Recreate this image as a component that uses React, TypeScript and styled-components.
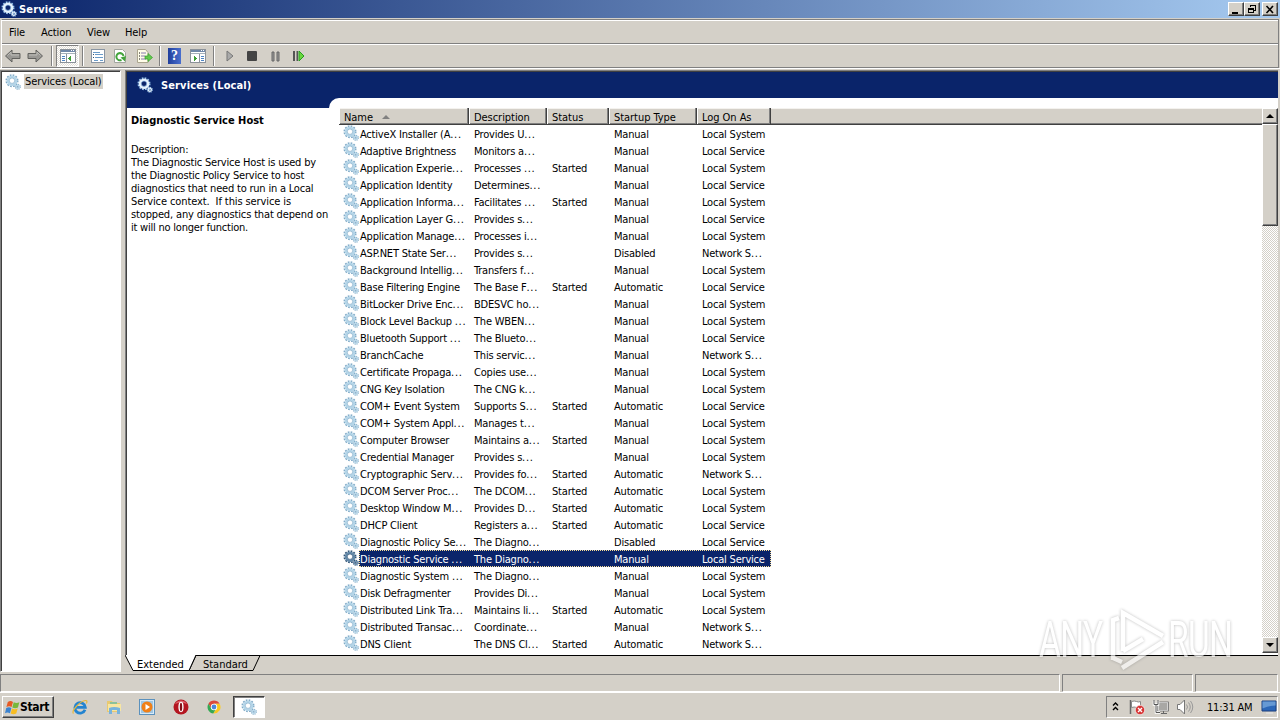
import type { ReactNode } from "react";
import styled, { createGlobalStyle, css } from "styled-components";

const GlobalStyle = createGlobalStyle`
    * { box-sizing: border-box; }
    body {
        margin: 0;
        overflow: hidden;
        background: #d4d0c8;
        font-family: "DejaVu Sans Condensed", "DejaVu Sans", sans-serif;
        font-stretch: condensed;
        font-size: 11px;
        letter-spacing: -0.2px;
        color: #000;
        cursor: default;
    }
    svg { display: block; flex: none; }
`;

const raised = css`
    background: #d4d0c8;
    border: 1px solid;
    border-color: #fff #404040 #404040 #fff;
    box-shadow: inset -1px -1px 0 #808080;
`;

const Screen = styled.div`
    position: relative;
    width: 1280px;
    height: 720px;
    display: flex;
    flex-direction: column;
    overflow: hidden;
    background: #d4d0c8;
`;

const TitleBar = styled.div`
    height: 18px;
    flex: none;
    display: flex;
    align-items: center;
    padding: 0 2px 0 1px;
    background: linear-gradient(to right, #0a246a, #a6caf0);
    color: #fff;
`;

const TitleText = styled.span`
    flex: 1;
    margin-left: 2px;
    font-weight: bold;
    letter-spacing: 0.15px;
`;

const CaptionButton = styled.div<{ $gap?: boolean }>`
    ${raised}
    width: 16px;
    height: 14px;
    margin-left: ${({ $gap }) => ($gap ? "2px" : "0")};
    display: flex;
    align-items: center;
    justify-content: center;
`;

const Bars = styled.div`
    flex: none;
    margin: 1px 1px 0;
    border-top: 1px solid #808080;
    border-left: 1px solid #fff;
    border-right: 1px solid #808080;
`;

const MenuBar = styled.div`
    height: 24px;
    display: flex;
    align-items: center;
    gap: 16px;
    padding: 0 7px;
    border-top: 1px solid #fff;
    border-bottom: 1px solid #808080;
`;

const MenuItem = styled.span<{ $width: number }>`
    width: ${({ $width }) => $width}px;
    white-space: nowrap;
    letter-spacing: -0.1px;
`;

const ToolBar = styled.div`
    height: 24px;
    display: flex;
    align-items: center;
    padding-left: 2px;
    border-top: 1px solid #fff;
    border-bottom: 1px solid #808080;
`;

const ToolButton = styled.div<{ $width?: number; $pressed?: boolean }>`
    width: ${({ $width }) => $width ?? 23}px;
    height: 22px;
    display: flex;
    align-items: center;
    justify-content: center;
    ${({ $pressed }) => $pressed && css`
        border: 1px solid;
        border-color: #808080 #fff #fff #808080;
        background: repeating-conic-gradient(#fff 0 25%, #e0ddd6 0 50%) 0 0 / 2px 2px;
    `}
`;

const ToolDivider = styled.div`
    width: 2px;
    height: 20px;
    margin: 0 3px;
    border-left: 1px solid #808080;
    border-right: 1px solid #fff;
`;

const Body = styled.div`
    flex: none;
    height: 604px;
    display: flex;
    gap: 4px;
    padding-top: 1px;
    border-top: 1px solid #fff;
`;

const TreePane = styled.div`
    width: 121px;
    height: 602px;
    padding: 2px 1px 1px;
    border: 1px solid;
    border-color: #808080 #fff #fff #808080;
    box-shadow: inset 1px 1px 0 #404040;
    background: #fff;
`;

const TreeNode = styled.div`
    display: flex;
    align-items: center;
    height: 17px;
    padding-left: 3px;
`;

const TreeLabel = styled.span`
    margin-left: 3px;
    padding: 0 2px 0 1px;
    width: 79px;
    height: 15px;
    line-height: 15px;
    background: #d4d0c8;
    white-space: nowrap;
    letter-spacing: -0.1px;
`;

const MainPane = styled.div`
    width: 1153px;
    display: flex;
    flex-direction: column;
`;

const View = styled.div`
    height: 585px;
    display: flex;
    flex-direction: column;
    border-top: 1px solid #808080;
    border-left: 1px solid #808080;
    box-shadow: inset 1px 1px 0 #404040;
    padding: 1px 0 0 1px;
    background: #fff;
`;

const Banner = styled.div`
    height: 26px;
    flex: none;
    display: flex;
    align-items: center;
    padding-left: 10px;
    background: #0a246a;
    color: #fff;
    font-weight: bold;
    letter-spacing: 0.12px;
`;

const BannerText = styled.span`
    margin-left: 8px;
`;

const Split = styled.div`
    flex: 1;
    min-height: 0;
    display: flex;
    background: linear-gradient(#0a246a, #0a246a) 0 0 / 230px 10px no-repeat, #fff;
`;

const DetailPane = styled.div`
    width: 202px;
    padding: 16px 0 0 4px;
    line-height: 13px;
    white-space: pre;
`;

const DetailTitle = styled.div`
    font-weight: bold;
    margin-bottom: 16px;
    letter-spacing: 0;
`;

const DetailLine = styled.div<{ $ls?: number }>`
    letter-spacing: ${({ $ls }) => $ls ?? -0.2}px;
`;

const ListArea = styled.div`
    flex: 1;
    display: flex;
    padding: 10px 0 2px 10px;
    border-top-left-radius: 10px;
    background: #fff;
`;

const List = styled.div`
    width: 923px;
`;

const HeaderRow = styled.div`
    height: 17px;
    display: flex;
    background: #d4d0c8;
    border-bottom: 1px solid #404040;
    box-shadow: inset 0 -1px 0 #808080, inset 0 1px 0 #f4f2ee;
`;

const HeaderCell = styled.div<{ $width: number }>`
    width: ${({ $width }) => $width}px;
    display: flex;
    align-items: center;
    gap: 9px;
    padding: 2px 0 0 4px;
    border-left: 1px solid #fff;
    border-right: 1px solid #404040;
    box-shadow: inset -1px 0 0 #808080;
    letter-spacing: -0.05px;
`;

const Row = styled.div<{ $selected?: boolean }>`
    height: 17px;
    display: flex;
    line-height: 19px;
    color: ${({ $selected }) => ($selected ? "#fff" : "#000")};
`;

const IconCell = styled.div`
    width: 20px;
    padding: 0 0 0 4px;
`;

const Cells = styled.div<{ $selected?: boolean }>`
    width: 412px;
    height: 17px;
    display: flex;
    ${({ $selected }) => $selected && css`
        background: #0a246a;
        outline: 1px dotted #f5db95;
        outline-offset: -1px;
    `}
`;

const Cell = styled.span<{ $width: number }>`
    width: ${({ $width }) => $width}px;
    padding-left: 1px;
    white-space: nowrap;
`;

const Dots = styled.span`
    letter-spacing: 0.7px;
`;

const ScrollBar = styled.div`
    width: 16px;
    display: flex;
    flex-direction: column;
    justify-content: space-between;
    background: repeating-conic-gradient(#fff 0 25%, #d4d0c8 0 50%) 0 0 / 2px 2px;
`;

const ScrollButton = styled.div`
    ${raised}
    height: 16px;
    display: flex;
    align-items: center;
    justify-content: center;
`;

const ScrollThumb = styled.div`
    ${raised}
    height: 102px;
    margin-bottom: auto;
`;

const Tabs = styled.div`
    height: 17px;
`;

const StatusBar = styled.div`
    flex: none;
    height: 18px;
    margin-top: 2px;
    display: flex;
    gap: 2px;
`;

const StatusPart = styled.div<{ $width: number }>`
    width: ${({ $width }) => $width}px;
    border: 1px solid;
    border-color: #808080 #fff #fff #808080;
`;

const TaskBar = styled.div`
    flex: 1;
    display: flex;
    align-items: flex-start;
    padding: 3px 2px 0 2px;
    border-top: 1px solid #fff;
`;

const StartButton = styled.div`
    ${raised}
    width: 52px;
    height: 22px;
    display: flex;
    align-items: center;
    padding-left: 2px;
    font-weight: bold;
    font-size: 12px;
    letter-spacing: -0.3px;
`;

const QuickLaunch = styled.div`
    height: 22px;
    display: flex;
    align-items: center;
    gap: 17.5px;
    margin-left: 18px;
`;

const TaskButton = styled.div`
    width: 32px;
    height: 22px;
    margin-left: 11px;
    display: flex;
    align-items: center;
    justify-content: center;
    border: 1px solid;
    border-color: #404040 #fff #fff #404040;
    box-shadow: inset 1px 1px 0 #808080;
    background: #fff;
`;

const Tray = styled.div`
    width: 172px;
    height: 22px;
    margin-left: auto;
    display: flex;
    align-items: center;
    padding-left: 5px;
    border: 1px solid;
    border-color: #808080 #fff #fff #808080;
`;

const TrayIcons = styled.div`
    display: flex;
    gap: 6px;
`;

const Clock = styled.span`
    width: 49px;
    margin: 0 5px 0 13px;
    white-space: nowrap;
`;

const Watermark = styled.div`
    position: absolute;
    left: 1039px;
    top: 606px;
    display: flex;
    align-items: center;
    height: 68px;
    opacity: 0.65;
    filter: drop-shadow(0 0 1.5px rgba(90, 90, 90, 0.6));
    pointer-events: none;
`;

const WatermarkWord = styled.span<{ $width: number }>`
    width: ${({ $width }) => $width}px;
    font: 400 50px/68px "Roboto", sans-serif;
    letter-spacing: -1px;
    color: #fff;
    transform: scaleX(0.67);
    transform-origin: left;
    white-space: nowrap;
`;

const Gear = ({ tone = "#7fa9c6", body = "#b4d5e8" }: { tone?: string; body?: string }) => (
    <svg width="16" height="16" viewBox="0 0 16 16" fill="none">
        <circle cx="7" cy="6.7" r="5.7" stroke={tone} strokeWidth="1.6" strokeDasharray="1.7 1.284" />
        <circle cx="7" cy="6.7" r="4" stroke={body} strokeWidth="2.6" />
        <circle cx="7" cy="6.7" r="2.7" stroke={tone} strokeWidth="0.6" />
        <circle cx="12.8" cy="12.8" r="2.5" stroke={tone} strokeWidth="1.1" strokeDasharray="1.1 0.86" />
        <circle cx="12.8" cy="12.8" r="1.6" stroke={body} strokeWidth="1.3" />
        <circle cx="12.8" cy="12.8" r="0.9" fill={tone} />
    </svg>
);

const Arrow = ({ flip }: { flip?: boolean }) => (
    <svg width="18" height="16" viewBox="0 0 18 16" transform={flip ? "scale(-1 1)" : undefined}>
        <path d="M1.5 8 8 2v3.5h8v5H8V14z" fill="#999894" stroke="#62625f" />
        <path d="M3.5 7.5 7 4v3h8" fill="none" stroke="#bdbcb7" />
    </svg>
);

// console window with a panel on one side
const PaneIcon = ({ right }: { right?: boolean }) => (
    <svg width="16" height="14" viewBox="0 0 16 14" shapeRendering="crispEdges">
        <rect x="0.5" y="0.5" width="15" height="13" fill="#fff" stroke="#8b929a" />
        <path d="M1 1h14v2H1z" fill="#7188a8" />
        <path d="M11 1h1v1h-1zM13 1h1v1h-1z" fill="#fff" />
        <path d="M1 4h14v1H1z" fill="#a7b1bb" />
        <path d={right ? "M9.5 5v9" : "M6.5 5v9"} stroke="#8b929a" />
        <path d={right ? "M11 7h3M11 9h3M11 11h3" : "M2 7h3M2 9h3M2 11h3"} stroke="#4f85c4" />
        <path d={right ? "M4 7v5l3-2.5z" : "M11 7v5L8 9.5z"} fill="#3d9e35" />
    </svg>
);

const SheetIcon = () => (
    <svg width="16" height="16" viewBox="0 0 16 16">
        <rect x="1.5" y="1.500" width="13" height="13" fill="#fff" stroke="#8995a3" />
        <path d="M3 4.500h7M5 6.500h8M5 9.500h8M4 12.500h4M10 12.500h3" stroke="#6a9bc8" />
        <path d="M3 6.500h1M3 9.500h1" stroke="#35526f" />
    </svg>
);

const RefreshIcon = () => (
    <svg width="16" height="16" viewBox="0 0 16 16">
        <path d="M2.500 1.500h8l3 3v10h-11z" fill="#fff" stroke="#a1a59e" />
        <path d="M9.500 12A3.600 3.600 0 1 1 11.500 8" fill="none" stroke="#43a43b" strokeWidth="2" />
        <path d="M8.500 9.500 14 8l-1 5.500z" fill="#43a43b" />
    </svg>
);

const ExportIcon = () => (
    <svg width="17" height="16" viewBox="0 0 17 16">
        <path d="M1.500 1.500h8l2.500 3v10H1.500z" fill="#fffde9" stroke="#aaa58e" />
        <path d="M5 5h5M5 8h4M5 11h5" stroke="#867cad" />
        <path d="M3 5h1M3 8h1M3 11h1" stroke="#111" />
        <path d="M9 8h3V5.500l4.500 4L12 13.500V11H9z" fill="#62ca4e" stroke="#369c2d" strokeWidth="0.7" />
    </svg>
);

const HelpBadge = styled.div`
    width: 13px;
    height: 16px;
    background: linear-gradient(90deg, #213f9c, #496fce);
    color: #fff;
    font: bold 14px/16px "Liberation Serif", serif;
    text-align: center;
`;

const StartFlag = () => (
    <svg width="15" height="15" viewBox="0 0 16 16">
        <path d="M3 2q3-2 5.500 0L7 7.500Q4.500 6 1.500 7.500z" fill="#e75a24" />
        <path d="M9.300 2.400q3 1.500 6 0L13.800 8q-3 1.500-6 0z" fill="#78b83b" />
        <path d="M1.300 8.500q3-1.500 5.500 0L5.300 14Q2.500 12.500 0 14z" fill="#3b83d0" />
        <path d="M7.500 9q3 1.500 6 0L12 14.500q-3 1.500-6 0z" fill="#f8bd22" />
    </svg>
);

const IeIcon = () => (
    <svg width="16" height="16" viewBox="0 0 16 16" fill="none">
        <path d="M13 10.800A5.200 5.200 0 1 1 13.300 8.300H4" stroke="#2484d0" strokeWidth="2.800" />
        <path d="M1.500 14.500C-1 12 8 2 13.500 1.500c2-.2 1.500 2 .8 3" stroke="#e6b83e" strokeWidth="1.200" />
    </svg>
);

const FolderIcon = () => (
    <svg width="16" height="16" viewBox="0 0 16 16">
        <path d="M1 2h5l1 2h7v9H1z" fill="#e8c971" />
        <path d="M2 5h13v7H2z" fill="#f7e6a2" />
        <path d="M4 3h7v2H4z" fill="#8bc19a" />
        <path d="M3 9q5-2 11 0v6h-3v-4H6v4H3z" fill="#77b3dd" />
    </svg>
);

const PlayerIcon = () => (
    <svg width="16" height="16" viewBox="0 0 16 16">
        <rect x="0.500" y="0.500" width="15" height="15" fill="#d7eaf8" stroke="#5b91bd" />
        <rect x="2" y="2" width="12" height="12" fill="#9fc6e3" />
        <circle cx="8" cy="8" r="5.500" fill="#f08018" />
        <path d="M6.500 5v6l4.500-3z" fill="#fff" />
    </svg>
);

const OperaIcon = () => (
    <svg width="16" height="16" viewBox="0 0 16 16">
        <circle cx="8" cy="8" r="7.500" fill="#b41620" />
        <path d="M2 5a7 7 0 0 1 12 0q-6-3-12 0z" fill="#dd626a" />
        <ellipse cx="8" cy="8" rx="2.600" ry="5.200" fill="#fff" />
        <ellipse cx="8" cy="8" rx="1.200" ry="4.300" fill="#821018" />
    </svg>
);

const ChromeIcon = () => (
    <svg width="16" height="16" viewBox="0 0 16 16">
        <circle cx="8" cy="8" r="6.500" fill="#ddd" />
        <path d="M2.400 4.700A6.500 6.500 0 0 1 13.600 4.700H8L5.200 9.700z" fill="#dc483c" />
        <path d="M2.400 4.700A6.500 6.500 0 0 0 7.300 14.500L10.500 9.500H5.200z" fill="#36a852" />
        <path d="M13.600 4.700A6.500 6.500 0 0 1 7.300 14.500L10.800 9.600 8 4.700z" fill="#f8c821" />
        <circle cx="8" cy="8" r="3.200" fill="#fff" />
        <circle cx="8" cy="8" r="2.400" fill="#4b86db" />
    </svg>
);

const FlagIcon = () => (
    <svg width="18" height="18" viewBox="0 0 18 18">
        <path d="M2.500 2v14" stroke="#686868" strokeWidth="1.500" />
        <path d="M3.500 3.500q3-1 5 0t4 0v6q-2 1-4 0t-5 0z" fill="#fff" stroke="#888" />
        <circle cx="12" cy="12" r="4.700" fill="#d63434" stroke="#fff" strokeWidth="0.600" />
        <path d="m10 10 4 4m0-4-4 4" stroke="#fff" strokeWidth="1.400" />
    </svg>
);

const NetworkIcon = () => (
    <svg width="18" height="18" viewBox="0 0 18 18">
        <rect x="6" y="4.500" width="10" height="8" fill="#a9a8a5" stroke="#fff" />
        <rect x="5.500" y="4" width="11" height="9" fill="none" stroke="#555" strokeWidth="0.700" />
        <path d="M9 15.500h6M11.500 13v2" stroke="#666" />
        <path d="M2 2.500v4h4v-4M4 6.500v8h4" fill="none" stroke="#fff" strokeWidth="2.500" />
        <path d="M2 2v4.500h4V2M4 6.500v8h4" fill="none" stroke="#555" />
    </svg>
);

const SpeakerIcon = () => (
    <svg width="18" height="18" viewBox="0 0 18 18" fill="none">
        <path d="M1.500 6.500H4L8.500 2v14L4 11.500H1.500z" fill="#fff" stroke="#777" />
        <path d="M10.500 6.500q2 2.500 0 5M12.500 4.500q3.500 4.500 0 9M14.500 3q4.500 6 0 12" stroke="#999" />
    </svg>
);

const DesktopIcon = () => (
    <svg width="16" height="14" viewBox="0 0 16 14">
        <path d="M1 1h14v10H1z" fill="#2c67b8" stroke="#1b3e7e" />
        <path d="M1.500 1.500h13v4q-7 0-13 3z" fill="#6699d4" />
        <path d="M5 13h7" stroke="#e8e8e8" />
    </svg>
);

type Service = [name: string, description: string, status: string, startup: string, logOn: string];

const S = "Local System";
const L = "Local Service";
const N = "Network S...";

const services: Service[] = [
    ["ActiveX Installer (A...", "Provides U...", "", "Manual", S],
    ["Adaptive Brightness", "Monitors a...", "", "Manual", L],
    ["Application Experie...", "Processes ...", "Started", "Manual", S],
    ["Application Identity", "Determines...", "", "Manual", L],
    ["Application Informa...", "Facilitates ...", "Started", "Manual", S],
    ["Application Layer G...", "Provides s...", "", "Manual", L],
    ["Application Manage...", "Processes i...", "", "Manual", S],
    ["ASP.NET State Ser...", "Provides s...", "", "Disabled", N],
    ["Background Intellig...", "Transfers f...", "", "Manual", S],
    ["Base Filtering Engine", "The Base F...", "Started", "Automatic", L],
    ["BitLocker Drive Enc...", "BDESVC ho...", "", "Manual", S],
    ["Block Level Backup ...", "The WBEN...", "", "Manual", S],
    ["Bluetooth Support ...", "The Blueto...", "", "Manual", L],
    ["BranchCache", "This servic...", "", "Manual", N],
    ["Certificate Propaga...", "Copies use...", "", "Manual", S],
    ["CNG Key Isolation", "The CNG k...", "", "Manual", S],
    ["COM+ Event System", "Supports S...", "Started", "Automatic", L],
    ["COM+ System Appl...", "Manages t...", "", "Manual", S],
    ["Computer Browser", "Maintains a...", "Started", "Manual", S],
    ["Credential Manager", "Provides s...", "", "Manual", S],
    ["Cryptographic Serv...", "Provides fo...", "Started", "Automatic", N],
    ["DCOM Server Proc...", "The DCOM...", "Started", "Automatic", S],
    ["Desktop Window M...", "Provides D...", "Started", "Automatic", S],
    ["DHCP Client", "Registers a...", "Started", "Automatic", L],
    ["Diagnostic Policy Se...", "The Diagno...", "", "Disabled", L],
    ["Diagnostic Service ...", "The Diagno...", "", "Manual", L],
    ["Diagnostic System ...", "The Diagno...", "", "Manual", S],
    ["Disk Defragmenter", "Provides Di...", "", "Manual", S],
    ["Distributed Link Tra...", "Maintains li...", "Started", "Automatic", S],
    ["Distributed Transac...", "Coordinate...", "", "Manual", N],
    ["DNS Client", "The DNS Cl...", "Started", "Automatic", N],
];

const columns: [string, number][] = [
    ["Name", 130],
    ["Description", 78],
    ["Status", 62],
    ["Startup Type", 88],
    ["Log On As", 74],
];

const cellWidths = [114, 78, 62, 88, 70];

const description: [string, number?][] = [
    ["The Diagnostic Service Host is used by"],
    ["the Diagnostic Policy Service to host"],
    ["diagnostics that need to run in a Local"],
    ["Service context.  If this service is", -0.1],
    ["stopped, any diagnostics that depend on", -0.15],
    ["it will no longer function.", -0.22],
];

const selectedIndex = 25;

const Tool = ({ width, pressed, children }: { width?: number; pressed?: boolean; children: ReactNode }) => (
    <ToolButton $width={width} $pressed={pressed}>{children}</ToolButton>
);

const Clipped = ({ text }: { text: string }) =>
    text.endsWith("...") ? <>{text.slice(0, -3)}<Dots>...</Dots></> : <>{text}</>;

const App = () => (
    <Screen>
        <GlobalStyle />
        <TitleBar>
            <Gear tone="#9cc8ee" body="#e4f2fd" />
            <TitleText>Services</TitleText>
            <CaptionButton>
                <svg width="10" height="9"><path d="M1 7h6v2H1z" /></svg>
            </CaptionButton>
            <CaptionButton>
                <svg width="10" height="10" shapeRendering="crispEdges" fill="none" stroke="#000">
                    <path d="M3.500 3V1.500h5v5H7M3 1.500h6M1.500 4.500h5v4h-5zM1 5.500h6" />
                </svg>
            </CaptionButton>
            <CaptionButton $gap>
                <svg width="10" height="9"><path d="m1.500 1 6.500 7M8 1 1.500 8" stroke="#000" strokeWidth="1.600" /></svg>
            </CaptionButton>
        </TitleBar>
        <Bars>
            <MenuBar>
                <MenuItem $width={16}>File</MenuItem>
                <MenuItem $width={30}>Action</MenuItem>
                <MenuItem $width={22}>View</MenuItem>
                <MenuItem $width={22}>Help</MenuItem>
            </MenuBar>
            <ToolBar>
                <Tool width={18}><Arrow /></Tool>
                <Tool width={26}><Arrow flip /></Tool>
                <ToolDivider />
                <Tool pressed><PaneIcon /></Tool>
                <ToolDivider />
                <Tool width={21}><SheetIcon /></Tool>
                <Tool width={24}><RefreshIcon /></Tool>
                <Tool width={24}><ExportIcon /></Tool>
                <ToolDivider />
                <Tool width={21}><HelpBadge>?</HelpBadge></Tool>
                <Tool width={25}><PaneIcon right /></Tool>
                <ToolDivider />
                <Tool width={24}>
                    <svg width="10" height="12"><path d="M2 1v10l6-5z" fill="#aaa" stroke="#777" /></svg>
                </Tool>
                <Tool width={20}>
                    <svg width="10" height="10"><rect width="10" height="10" rx="1" fill="#444" /></svg>
                </Tool>
                <Tool width={26}>
                    <svg width="9" height="11"><path d="M1 1h2v9H1zM6 1h2v9H6z" fill="#999" stroke="#666" /></svg>
                </Tool>
                <Tool width={21}>
                    <svg width="12" height="12">
                        <path d="M0 1h2v10H0zM3.500 1h1.500v10H3.500z" fill="#555" />
                        <path d="M6 1v10l5-5z" fill="#6ad63e" stroke="#249e1e" />
                    </svg>
                </Tool>
            </ToolBar>
        </Bars>
        <Body>
            <TreePane>
                <TreeNode>
                    <Gear />
                    <TreeLabel>Services (Local)</TreeLabel>
                </TreeNode>
            </TreePane>
            <MainPane>
                <View>
                    <Banner>
                        <Gear tone="#9cc8ee" body="#e4f2fd" />
                        <BannerText>Services (Local)</BannerText>
                    </Banner>
                    <Split>
                        <DetailPane>
                            <DetailTitle>Diagnostic Service Host</DetailTitle>
                            <DetailLine>Description:</DetailLine>
                            {description.map(([line, ls]) => <DetailLine key={line} $ls={ls}>{line}</DetailLine>)}
                        </DetailPane>
                        <ListArea>
                            <List>
                                <HeaderRow>
                                    {columns.map(([label, width], i) => (
                                        <HeaderCell key={label} $width={width}>
                                            {label}
                                            {i === 0 && <svg width="8" height="4"><path d="M4 0 8 4H0z" fill="#808080" /></svg>}
                                        </HeaderCell>
                                    ))}
                                </HeaderRow>
                                {services.map((service, i) => (
                                    <Row key={service[0]} $selected={i === selectedIndex}>
                                        <IconCell>
                                            {i === selectedIndex ? <Gear tone="#2f5274" body="#6288a8" /> : <Gear />}
                                        </IconCell>
                                        <Cells $selected={i === selectedIndex}>
                                            {service.map((text, col) => (
                                                <Cell key={col} $width={cellWidths[col]}><Clipped text={text} /></Cell>
                                            ))}
                                        </Cells>
                                    </Row>
                                ))}
                            </List>
                            <ScrollBar>
                                <ScrollButton><svg width="8" height="4"><path d="M4 0 8 4H0z" /></svg></ScrollButton>
                                <ScrollThumb />
                                <ScrollButton><svg width="8" height="4"><path d="M0 0h8L4 4z" /></svg></ScrollButton>
                            </ScrollBar>
                        </ListArea>
                    </Split>
                </View>
                <Tabs>
                    <svg width="1153" height="17" fontSize="11" letterSpacing="-0.02">
                        <path d="M70 0.500H1153" stroke="#000" />
                        <path d="M64 15.500 71 .5h64l-7 15z" fill="#d4d0c8" stroke="#000" />
                        <path d="M0 0 8 15.500h56L71 0z" fill="#fff" />
                        <path d="M0 0 8 15.500h56L71 0" fill="none" stroke="#000" />
                        <text x="12" y="13">Extended</text>
                        <text x="78" y="13">Standard</text>
                    </svg>
                </Tabs>
            </MainPane>
        </Body>
        <StatusBar>
            <StatusPart $width={1060} />
            <StatusPart $width={131} />
            <StatusPart $width={83} />
        </StatusBar>
        <TaskBar>
            <StartButton><StartFlag />Start</StartButton>
            <QuickLaunch>
                <IeIcon />
                <FolderIcon />
                <PlayerIcon />
                <OperaIcon />
                <ChromeIcon />
            </QuickLaunch>
            <TaskButton><Gear /></TaskButton>
            <Tray>
                <svg width="16" height="12" fill="none" stroke="#000" strokeWidth="1.400">
                    <path d="m1 4.500 2.500-2.500L6 4.500M1 9 3.500 6.500 6 9" />
                </svg>
                <TrayIcons>
                    <FlagIcon />
                    <NetworkIcon />
                    <SpeakerIcon />
                </TrayIcons>
                <Clock>11:31 AM</Clock>
                <DesktopIcon />
            </Tray>
        </TaskBar>
        <Watermark>
            <WatermarkWord $width={71}>ANY</WatermarkWord>
            <svg width="58" height="68" viewBox="0 0 58 68" fill="none" stroke="#fff" strokeWidth="4.500">
                <path d="M3 54V14l6-2M3 52l9 4" />
                <path d="M13 45V7l40 23M13 45l20-12" />
                <path d="M12 62l41-26" />
            </svg>
            <WatermarkWord $width={70}>RUN</WatermarkWord>
        </Watermark>
    </Screen>
);

export default App;
